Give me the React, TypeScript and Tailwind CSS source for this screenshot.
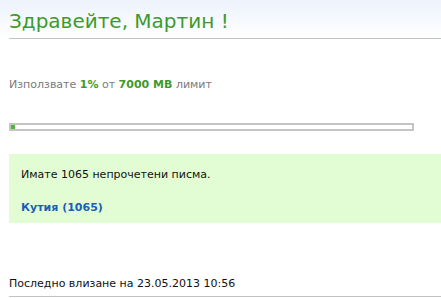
export default function App() {
  return (
    <div className="w-[441px] h-[298px] overflow-hidden bg-white font-['DejaVu_Sans',sans-serif]">
      <div className="pl-[9px] bg-gradient-to-b from-[#edf3fd] to-white">
        <h1 className="pt-[9px] pb-[4px] text-[20px] leading-[25px] text-[#3e9a2c] border-b border-[#c3c3c3]">
          Здравейте, Мартин !
        </h1>
      </div>

      <div className="pl-[9px]">
        <p className="mt-[39px] text-[11px] leading-[14px] text-[#7a7a7a]">
          Използвате <b className="text-[#3e9a2c]">1%</b> от{" "}
          <b className="text-[#3e9a2c]">7000 MB</b> лимит
        </p>

        <div className="mt-[31px] w-[405px] h-[8px] border-2 border-[#c4c4c4] bg-white">
          <div className="h-full w-[4px] bg-[#4eb733]" />
        </div>

        <div className="mt-[23px] h-[69px] bg-[#e2fdd3] pl-[12px] pt-[14px] text-[11px] leading-[14px]">
          <p className="text-[#111]">Имате 1065 непрочетени писма.</p>
          <a className="block mt-[19px] font-bold text-[#1a5eb8]">Кутия (1065)</a>
        </div>

        <div className="mt-[54px] pb-[5px] border-b border-[#c3c3c3] text-[11px] leading-[14px] text-[#111]">
          Последно влизане на 23.05.2013 10:56
        </div>
      </div>
    </div>
  )
}
